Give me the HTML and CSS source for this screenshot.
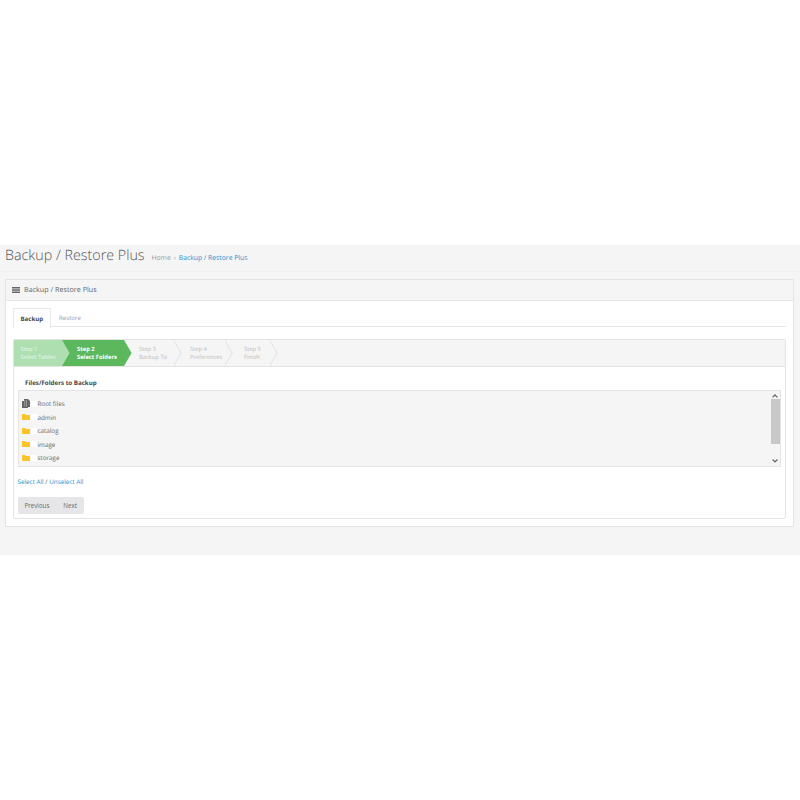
FILE: index.html
```html
<!DOCTYPE html>
<html lang="en">

<head>
    <title>Backup / Restore Plus</title>
    <link rel="stylesheet" href="styles.css">
</head>

<body>
    <div id="content">
        <div class="page-header">
            <h1>Backup / Restore Plus</h1>
            <ul class="breadcrumb">
                <li>Home</li>
                <li class="sep">›</li>
                <li><a href="#">Backup / Restore Plus</a></li>
            </ul>
        </div>
        <div class="panel">
            <div class="panel-heading">
                <svg class="list-icon" viewBox="0 0 8 6" width="8" height="6">
                    <path fill="#666" d="M0 0h8v1.500H0zM0 2.250h8v1.500H0zM0 4.500h8V6H0z" />
                </svg>
                <span>Backup / Restore Plus</span>
            </div>
            <div class="panel-body">
                <div class="tabs">
                    <div class="tab active">Backup</div>
                    <div class="tab">Restore</div>
                </div>
                <div class="wizard">
                    <div class="steps">
                        <div class="step done"><b>Step 1</b><span>Select Tables</span></div>
                        <div class="step current"><b>Step 2</b><span>Select Folders</span></div>
                        <div class="step step-3"><b>Step 3</b><span>Backup To</span></div>
                        <div class="step step-4"><b>Step 4</b><span>Preferences</span></div>
                        <div class="step step-5"><b>Step 5</b><span>Finish</span></div>
                    </div>
                    <div class="wizard-body">
                        <h4>Files/Folders to Backup</h4>
                        <div class="file-list">
                            <div class="rows">
                                <div class="row">
                                    <svg viewBox="0 0 8 9" width="8" height="9">
                                        <path fill="#666" d="M2 0h4l2 2v6H6v1H0V2h2z" />
                                        <path fill="#ccc" d="M2.600 1v6.400h.5V1zM4.400 1v6.400h.5V1z" />
                                    </svg>
                                    <i class="check"></i><span>Root files</span>
                                </div>
                                <div class="row">
                                    <svg viewBox="0 0 8 6" width="8" height="6">
                                        <path fill="#fbc52a" d="M0 0h3l1 1h4v5H0z" />
                                    </svg>
                                    <i class="check"></i><span>admin</span>
                                </div>
                                <div class="row">
                                    <svg viewBox="0 0 8 6" width="8" height="6">
                                        <path fill="#fbc52a" d="M0 0h3l1 1h4v5H0z" />
                                    </svg>
                                    <i class="check"></i><span>catalog</span>
                                </div>
                                <div class="row">
                                    <svg viewBox="0 0 8 6" width="8" height="6">
                                        <path fill="#fbc52a" d="M0 0h3l1 1h4v5H0z" />
                                    </svg>
                                    <i class="check"></i><span>image</span>
                                </div>
                                <div class="row">
                                    <svg viewBox="0 0 8 6" width="8" height="6">
                                        <path fill="#fbc52a" d="M0 0h3l1 1h4v5H0z" />
                                    </svg>
                                    <i class="check"></i><span>storage</span>
                                </div>
                            </div>
                            <div class="scrollbar">
                                <svg viewBox="0 0 8 6" width="8" height="6">
                                    <path fill="none" stroke="#666" stroke-width="1.300" d="M1.500 4.500 4 2l2.500 2.500" />
                                </svg>
                                <div class="thumb"></div>
                                <svg viewBox="0 0 8 6" width="8" height="6">
                                    <path fill="none" stroke="#666" stroke-width="1.300" d="M1.500 1.500 4 4l2.500-2.500" />
                                </svg>
                            </div>
                        </div>
                        <p class="select-links"><a href="#">Select All</a> / <a href="#">Unselect All</a></p>
                        <div class="buttons">
                            <button>Previous</button>
                            <button>Next</button>
                        </div>
                    </div>
                </div>
            </div>
        </div>
    </div>
</body>

</html>
```

FILE: styles.css
```css
body {
    margin: 0;
    background-color: #fff;
    font-family: "Open Sans", sans-serif;
    text-rendering: geometricPrecision;
    color: #666;
}

a {
    color: #1e91cf;
    text-decoration: none;
}

#content {
    margin-top: 245px;
    height: 310px;
    box-sizing: border-box;
    background-color: #f5f5f5;
}

.page-header {
    display: flex;
    align-items: center;
    height: 26px;
    box-sizing: content-box;
    padding: 0 0 0 5px;
    border-bottom: 1px solid #f0f0f0;
    margin-bottom: 7px;
}

h1 {
    margin: -5px 0 0;
    font-size: 14.300px;
    font-weight: 300;
    color: #555;
}

.breadcrumb {
    display: flex;
    gap: 3px;
    list-style: none;
    margin: -1px 0 0 7px;
    padding: 0;
    font-size: 6.800px;
    color: #999;
}

.panel {
    margin: 0 6.500px 0 5px;
    height: 248px;
    box-sizing: border-box;
    background-color: #fff;
    border: 1px solid #e4e4e4;
}

.panel-heading {
    display: flex;
    align-items: center;
    gap: 4px;
    height: 20px;
    padding-left: 6px;
    background-color: #f5f5f5;
    border-bottom: 1px solid #e8e8e8;
    font-size: 7.200px;
    color: #666;
}

.panel-body {
    padding: 7px 7px 0 6.500px;
}

.tabs {
    display: flex;
    height: 18px;
    border-bottom: 1px solid #e8e8e8;
    font-size: 6.100px;
}

.tab {
    padding: 0 8px;
    line-height: 19px;
    color: #999;
}

.tab.active {
    height: 19px;
    padding: 0 7px;
    background-color: #fff;
    border: 1px solid #e8e8e8;
    border-bottom: none;
    box-sizing: content-box;
    margin-top: 0;
    font-weight: 700;
    color: #444;
}

.wizard {
    margin-top: 12px;
    height: 180px;
    box-sizing: border-box;
    border: 1px solid #e4e4e4;
    border-radius: 2px;
}

.steps {
    display: flex;
    height: 26px;
    background-color: #f5f5f5;
    border-bottom: 1px solid #e4e4e4;
}

.step {
    position: relative;
    display: flex;
    flex-direction: column;
    justify-content: center;
    width: 48.500px;
    box-sizing: border-box;
    padding-left: 7px;
    font-size: 5.800px;
    line-height: 8px;
    color: #bbb;
}

.step b {
    font-weight: 400;
}

/* chevron for each step */
.step::after {
    content: "";
    position: absolute;
    top: 3.500px;
    right: -9.500px;
    width: 18.400px;
    height: 18.400px;
    border-top: 1px solid #ddd;
    border-right: 1px solid #ddd;
    box-sizing: border-box;
    transform: scaleX(0.58) rotate(45deg);
}

.step.done {
    background-color: #addfb1;
    color: #eef8ef;
}

.step.current {
    width: 62px;
    padding-left: 15px;
    background-color: #5cb85c;
    color: #fff;
    font-weight: 700;
}

.step.current b {
    font-weight: 700;
}

.step-3 {
    width: 49.500px;
    padding-left: 15px;
}

.step-4 {
    width: 51px;
    padding-left: 16.500px;
}

.step-5 {
    width: 45px;
    padding-left: 19.500px;
}

.step.done::after,
.step.current::after {
    border: none;
    z-index: 1;
}

.step.done::after {
    background-color: #addfb1;
}

.step.current::after {
    background-color: #5cb85c;
}

.wizard-body {
    padding: 11px 4px 0 4px;
}

h4 {
    margin: 0 0 2px 7.500px;
    font-size: 6.200px;
    line-height: 10px;
    font-weight: 700;
    color: #444;
}

.file-list {
    display: flex;
    justify-content: space-between;
    height: 77px;
    box-sizing: border-box;
    background-color: #f5f5f5;
    border: 1px solid #e4e4e4;
}

.rows {
    padding: 6px 0 0 3px;
}

.row {
    display: flex;
    align-items: center;
    height: 13.500px;
    font-size: 6.300px;
    color: #666;
}

.check {
    width: 6px;
    height: 6px;
    margin: 0 1px 0 1px;
    background-color: #fff;
    border-radius: 1px;
}

.scrollbar {
    display: flex;
    flex-direction: column;
    align-items: center;
    justify-content: space-between;
    width: 9px;
    padding: 2px 0;
    box-sizing: border-box;
}

.thumb {
    width: 9px;
    height: 47px;
    margin-bottom: 14px;
    background-color: #c8c8c8;
}

.select-links {
    margin: 10px 0 0;
    font-size: 6.300px;
    line-height: 9px;
    color: #666;
}

.buttons {
    display: inline-flex;
    margin-top: 11px;
    height: 17px;
    background-color: #e6e6e9;
    border-radius: 2px;
}

button {
    padding: 0 7px;
    border: none;
    background: transparent;
    font-family: inherit;
    font-size: 6.200px;
    color: #666;
}
```
